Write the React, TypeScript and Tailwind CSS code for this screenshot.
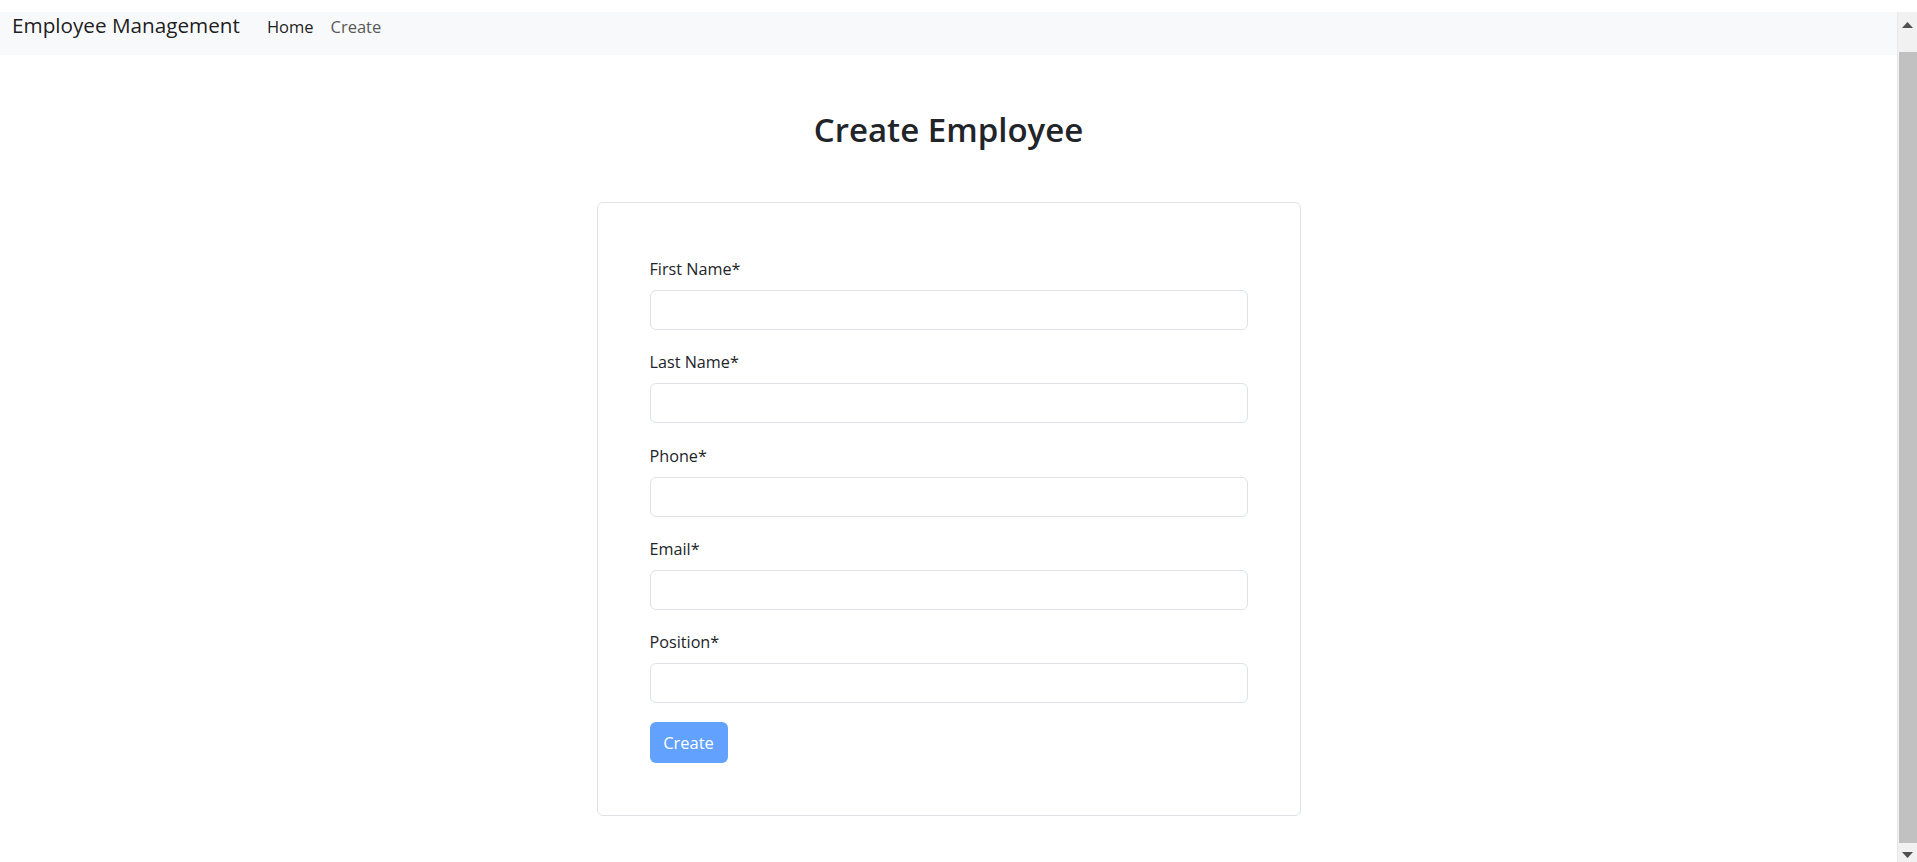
import React from 'react';

const fields = ['First Name', 'Last Name', 'Phone', 'Email', 'Position'];

const Scrollbar: React.FC = () => (
  <div className="w-[20px] shrink-0 flex flex-col bg-[#f1f1f1] border-l border-[#e9e9e9]">
    <div className="h-[40px] flex justify-center pt-[10px]">
      <svg width="11" height="6" viewBox="0 0 11 6">
        <polygon points="5.5,0 11,6 0,6" fill="#505050" />
      </svg>
    </div>
    <div className="flex-1 bg-[#c1c1c1] ml-[1px]" />
    <div className="h-[19px] flex justify-center pt-[9px]">
      <svg width="11" height="6" viewBox="0 0 11 6">
        <polygon points="0,0 11,0 5.5,6" fill="#505050" />
      </svg>
    </div>
  </div>
);

export default function App() {
  return (
    <div className="h-[862px] w-full overflow-hidden bg-white flex flex-col font-['Open_Sans',sans-serif] text-[#212529]">
      <div className="h-3 shrink-0" />
      <div className="flex flex-1 min-h-0">
        <div className="flex-1 min-w-0 flex flex-col">
          <nav className="h-[43px] shrink-0 bg-[#f8f9fa] flex items-baseline px-3 pt-[1.5px]">
            <a className="text-[20.7px] leading-[22px] text-black/90 mr-[27px] cursor-pointer">Employee Management</a>
            <a className="text-[16.5px] leading-[22px] text-black/90 mr-[17px] cursor-pointer">Home</a>
            <a className="text-[16.5px] leading-[22px] text-[#595959] cursor-pointer">Create</a>
          </nav>

          <main className="flex flex-col items-center">
            <h2 className="mt-[54px] text-[33px] leading-[42px] font-semibold">Create Employee</h2>

            <form
              className="mt-[51px] w-[704px] border border-[#dee2e6] rounded-[6px] px-[52px] pt-[53px] pb-[52px] flex flex-col"
              onSubmit={e => e.preventDefault()}
            >
              {fields.map(f => (
                <div key={f} className="flex flex-col mb-[19.3px]">
                  <label className="text-[16.2px] leading-[26px] mb-[8px]">{f}*</label>
                  <input
                    type="text"
                    className="h-[40px] w-full border border-[#dee2e6] rounded-[6px] px-3 text-[16.5px] outline-none bg-white"
                  />
                </div>
              ))}
              <button
                type="submit"
                disabled
                className="w-[78px] h-[41px] rounded-[6px] bg-[#62a1fe] text-white text-[16.5px] flex items-center justify-center"
              >
                Create
              </button>
            </form>
          </main>
        </div>
        <Scrollbar />
      </div>
    </div>
  );
}
